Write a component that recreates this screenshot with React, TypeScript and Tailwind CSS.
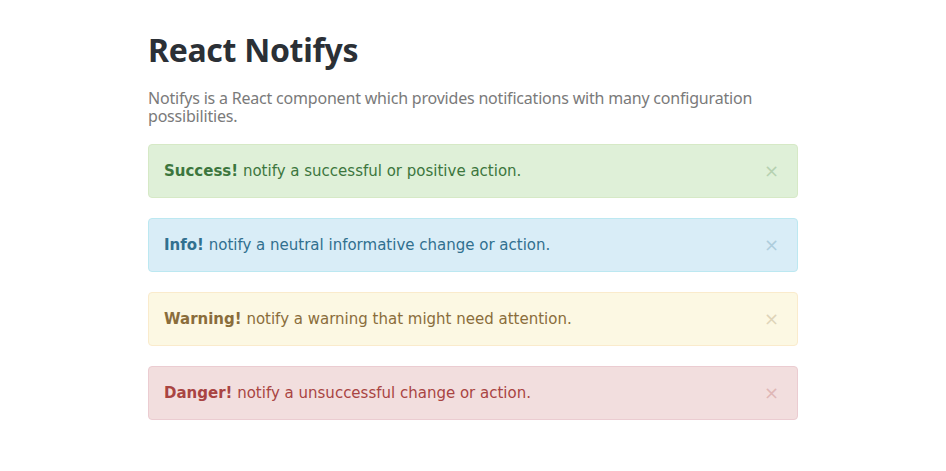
import React from 'react';

const alerts = [
  { title: 'Success!', text: 'notify a successful or positive action.', box: 'bg-[#dff0d8] border-[#d6e9c6] text-[#3c763d]' },
  { title: 'Info!', text: 'notify a neutral informative change or action.', box: 'bg-[#d9edf7] border-[#bce8f1] text-[#31708f]' },
  { title: 'Warning!', text: 'notify a warning that might need attention.', box: 'bg-[#fcf8e3] border-[#faebcc] text-[#8a6d3b]' },
  { title: 'Danger!', text: 'notify a unsuccessful change or action.', box: 'bg-[#f2dede] border-[#ebccd1] text-[#a94442]' },
];

export default function App() {
  return (
    <main className="min-h-screen bg-white">
      <div className="w-[650px] mx-auto pt-[30px]">
        <h1 className="text-[32px] leading-[40px] font-bold text-[#2b3036] font-['Noto_Sans',sans-serif] tracking-[-0.3px]">
          React Notifys
        </h1>
        <p className="mt-[19px] w-[630px] text-[16px] leading-[18px] text-[#7a7a7a] font-['Noto_Sans',sans-serif] tracking-[-0.2px]">
          Notifys is a React component which provides notifications with many configuration possibilities.
        </p>
        <div className="mt-[19px] flex flex-col gap-[20px]">
          {alerts.map((a) => (
            <div key={a.title} className={`flex items-center justify-between border rounded-[4px] px-[15px] h-[54px] ${a.box}`}>
              <p className="text-[15px] leading-[20px] font-['DejaVu_Sans',sans-serif]">
                <strong className="font-bold">{a.title}</strong> {a.text}
              </p>
              <span className="text-[18px] leading-none opacity-25 mr-[3px] font-['DejaVu_Sans',sans-serif]">×</span>
            </div>
          ))}
        </div>
      </div>
    </main>
  );
}
